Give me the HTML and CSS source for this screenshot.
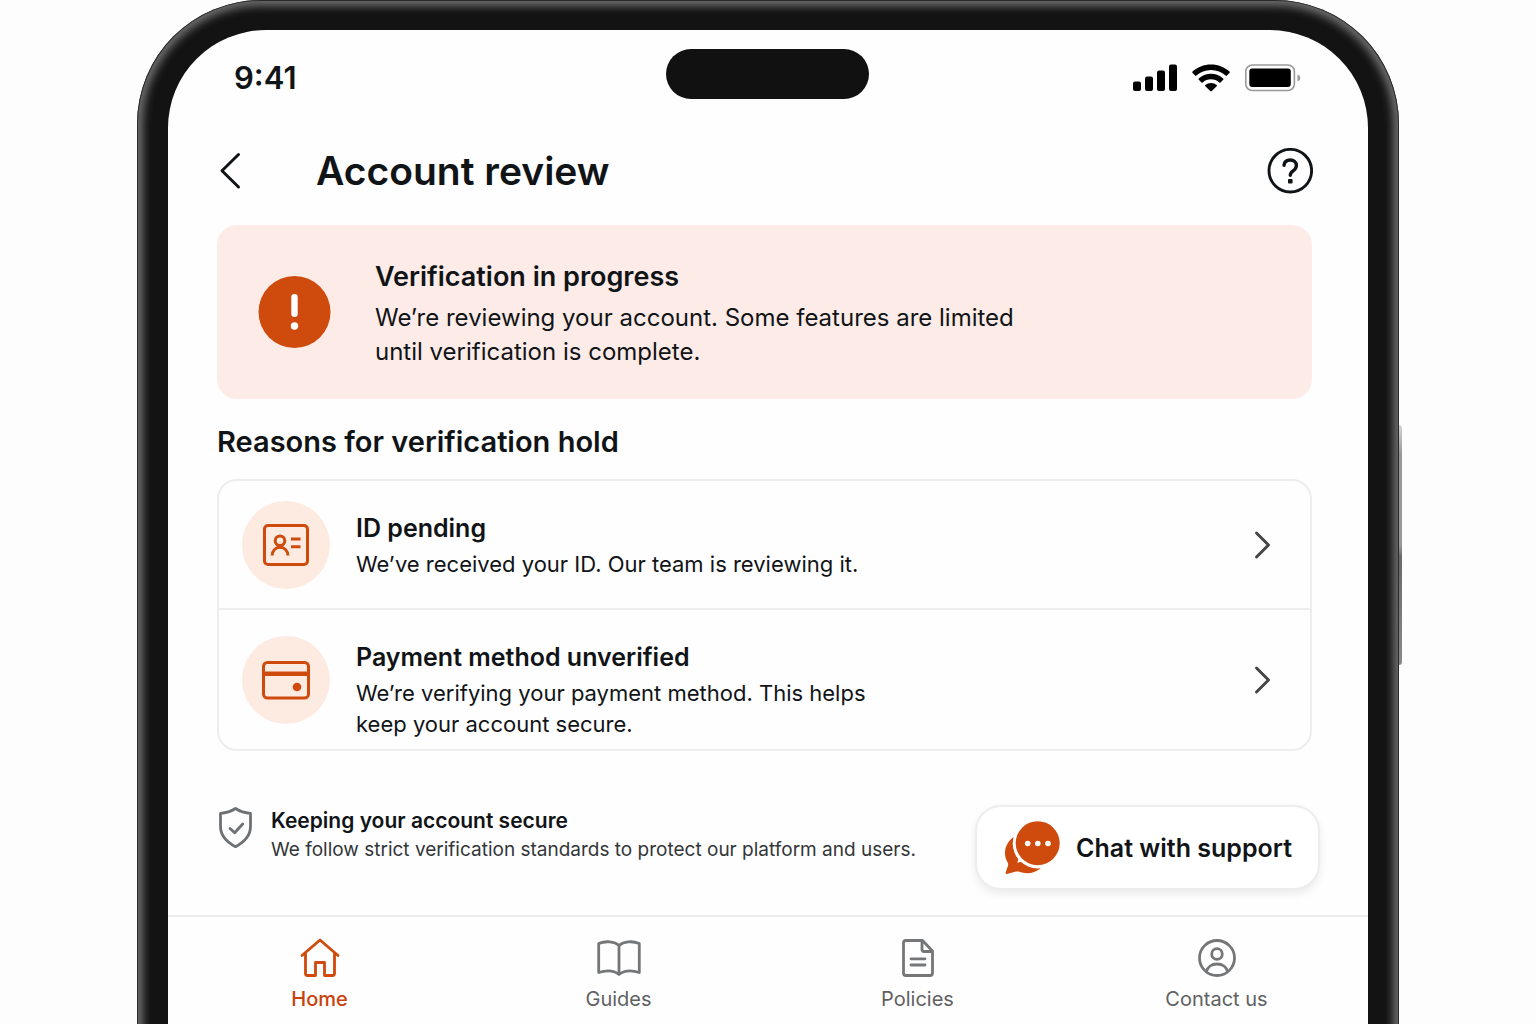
FILE: index.html
```html
<!DOCTYPE html>
<html lang="en">
<head>
  <meta charset="utf-8">
  <meta name="viewport" content="width=device-width, initial-scale=1">
  <title>Account review</title>
  <link rel="stylesheet" href="styles.css">
</head>
<body>
  <div class="device">
    <span class="side-button"></span>
    <div class="bezel">
      <div class="screen">
        <div class="status-bar">
          <time class="clock">9:41</time>
          <span class="island"></span>
          <div class="status-icons">
            <svg width="44" height="28" viewBox="0 0 44 28" aria-hidden="true">
              <rect x="0" y="17.500" width="8" height="9.500" rx="2"/>
              <rect x="12" y="12.500" width="8" height="14.500" rx="2"/>
              <rect x="24" y="6.500" width="8" height="20.500" rx="2"/>
              <rect x="36" y="0.500" width="8" height="26.500" rx="2"/>
            </svg>
            <svg width="38" height="28" viewBox="0 0 38 28" aria-hidden="true">
              <path d="M19 .5C11.800 .5 5.200 3.200.5 7.600c-.4.400-.4.900 0 1.300l2.600 2.700c.4.400.9.400 1.300 0C8.200 8 13.300 5.900 19 5.900S29.800 8 33.600 11.600c.4.400.9.400 1.300 0l2.600-2.700c.4-.4.400-.9 0-1.300C32.800 3.200 26.200.5 19 .5z"/>
              <path d="M19 9.700c-4.700 0-9 1.800-12.200 4.700-.4.400-.4.900 0 1.300l2.700 2.700c.4.400.8.400 1.200 0 2.200-2 5.100-3.200 8.300-3.200s6.100 1.200 8.300 3.200c.4.400.8.400 1.200 0l2.700-2.700c.4-.4.400-.9 0-1.300C28 11.500 23.700 9.700 19 9.700z"/>
              <path d="M19 19c-2.200 0-4.200.8-5.700 2.100-.4.400-.4.800 0 1.200l4.900 4.800c.5.500 1.100.5 1.600 0l4.900-4.800c.4-.4.400-.8 0-1.200C23.200 19.800 21.200 19 19 19z"/>
            </svg>
            <svg width="56" height="28" viewBox="0 0 56 28" aria-hidden="true">
              <rect x=".8" y="1" width="48.600" height="25.500" rx="6.500" fill="none" stroke="#9a9a9a" stroke-width="1.600"/>
              <rect x="4.300" y="4.500" width="41.500" height="18.500" rx="3"/>
              <path d="M52.500 10.500c2 .8 2.800 2 2.800 3.500s-.8 2.700-2.800 3.500z" fill="#9a9a9a"/>
            </svg>
          </div>
        </div>

        <header class="header">
          <button class="back" type="button" aria-label="Back">
            <svg width="26" height="40" viewBox="0 0 26 40" aria-hidden="true"><path d="M21.500 3.500 5 19.800 21.500 36"/></svg>
          </button>
          <h1 class="title">Account review</h1>
          <button class="help" type="button" aria-label="Help">
            <svg width="46" height="46" viewBox="0 0 46 46" aria-hidden="true">
              <circle cx="23.300" cy="22.700" r="21.300" stroke-width="2.900"/>
              <path d="M17 17.200c.4-3.400 2.900-5.200 6.200-5.200 3.600 0 6.200 2.200 6.200 5.500 0 2.700-1.500 4-3.300 5.300-2 1.400-2.800 2.200-2.800 4.400" stroke-width="3.400"/>
              <rect class="solid" x="21" y="31" width="4.600" height="4.400" rx="1"/>
            </svg>
          </button>
        </header>

        <main class="content">
          <section class="alert">
            <svg class="alert-icon" width="73" height="73" viewBox="0 0 73 73" aria-hidden="true">
              <circle cx="36.500" cy="36" r="36" fill="#cf4b0d"/>
              <rect x="33.300" y="18" width="6.400" height="23" rx="3.200" fill="#fff"/>
              <circle cx="36.500" cy="50" r="3.700" fill="#fff"/>
            </svg>
            <div class="alert-text">
              <h2 class="alert-title">Verification in progress</h2>
              <p class="alert-body">We’re reviewing your account. Some features are limited until verification is complete.</p>
            </div>
          </section>

          <h2 class="section-title">Reasons for verification hold</h2>

          <div class="reasons">
            <a class="reason" href="#id">
              <span class="badge">
                <svg width="52" height="52" viewBox="0 0 52 52" aria-hidden="true">
                  <rect x="4.500" y="6.500" width="43" height="39" rx="3.500"/>
                  <circle cx="20" cy="21.800" r="4.800"/>
                  <path d="M12.200 36.500c.3-5.200 3.400-8.200 7.800-8.200s7.600 3 7.900 8.200M31 20h9.500M31 27.700h9.500"/>
                </svg>
              </span>
              <span class="reason-text">
                <strong class="reason-title">ID pending</strong>
                <span class="reason-body">We’ve received your ID. Our team is reviewing it.</span>
              </span>
              <svg class="chevron" width="20" height="32" viewBox="0 0 20 32" aria-hidden="true"><path d="M3.500 4 15.500 16 3.500 28"/></svg>
            </a>
            <a class="reason reason-long" href="#payment">
              <span class="badge">
                <svg width="52" height="52" viewBox="0 0 52 52" aria-hidden="true">
                  <rect x="3.500" y="8.500" width="45" height="35.500" rx="4"/>
                  <path d="M3.500 19.700h45" stroke-width="4.500"/>
                  <circle cx="37" cy="33" r="4.300" fill="#cf4b0d" stroke="none"/>
                </svg>
              </span>
              <span class="reason-text">
                <strong class="reason-title">Payment method unverified</strong>
                <span class="reason-body">We’re verifying your payment method. This helps keep your account secure.</span>
              </span>
              <svg class="chevron" width="20" height="32" viewBox="0 0 20 32" aria-hidden="true"><path d="M3.500 4 15.500 16 3.500 28"/></svg>
            </a>
          </div>
        </main>

        <section class="assist">
          <svg class="shield" width="37" height="44" viewBox="0 0 37 44" aria-hidden="true">
            <path d="M18.500 3.500c4.800 3.200 9.600 4.500 15 4.800v13c0 9.500-5.500 15.500-15 20.400C9 36.800 3.500 30.800 3.500 21.300v-13c5.400-.3 10.200-1.600 15-4.800z"/>
            <path d="m13 23.500 4.700 4.300 8-8.800"/>
          </svg>
          <div class="assist-text">
            <h3 class="assist-title">Keeping your account secure</h3>
            <p class="assist-body">We follow strict verification standards to protect our platform and users.</p>
          </div>
          <button class="chat" type="button">
            <svg width="55" height="54" viewBox="0 0 55 54" aria-hidden="true">
              <path d="M12 14C4.500 17.500 0 24.500 0 32c0 3.700 1 7 2.800 9.800.5 1 .5 2 .2 3L.6 51.700c-.2.800.2 1.300 1 1.200l9.600-2.300c1-.2 2-.1 3 .2 8 2.900 16.300 1.300 22.200-4.400z"/>
              <circle class="dot" cx="32.700" cy="22.400" r="25"/>
              <circle cx="32.700" cy="22.200" r="22"/>
              <path class="dot" d="M13.500 38l-1.300 3.800 4.300-1z"/>
              <circle class="dot" cx="22.700" cy="22.500" r="2.800"/>
              <circle class="dot" cx="32.800" cy="22.500" r="2.800"/>
              <circle class="dot" cx="43" cy="22.500" r="2.800"/>
            </svg>
            Chat with support
          </button>
        </section>

        <nav class="tabs" aria-label="Main">
          <a class="tab tab-active" href="#home" aria-current="page">
            <svg width="44" height="44" viewBox="0 0 44 44" aria-hidden="true">
              <path d="M4 19.500 22 4l18 15.500M7.500 17v20.500a2 2 0 0 0 2 2h8v-13h9v13h8a2 2 0 0 0 2-2V17"/>
            </svg>
            Home
          </a>
          <a class="tab" href="#guides">
            <svg width="44" height="44" viewBox="0 0 44 44" aria-hidden="true">
              <path d="M22 9.500C17.500 5.500 9 4.500 1.700 7.500v29c8-2.500 15.300-2 20.300 2 5-4 12.300-4.500 20.300-2v-29C35 4.500 26.500 5.500 22 9.500zM22 10v28.500"/>
            </svg>
            Guides
          </a>
          <a class="tab" href="#policies">
            <svg width="44" height="44" viewBox="0 0 44 44" aria-hidden="true">
              <path d="M10 4.500h16.500L36.500 15v22a2.500 2.500 0 0 1-2.500 2.500H10A2.500 2.500 0 0 1 7.500 37V7A2.500 2.500 0 0 1 10 4.500zM26 5v8.500a2 2 0 0 0 2 2h8.500M15 22.800h14M15 29h14"/>
            </svg>
            Policies
          </a>
          <a class="tab" href="#contact">
            <svg width="44" height="44" viewBox="0 0 44 44" aria-hidden="true">
              <circle cx="22" cy="22" r="17.500"/>
              <circle cx="22" cy="18" r="5.300"/>
              <path d="M11.500 35.500C12.500 31 16.500 28 22 28s9.500 3 10.500 7.500"/>
            </svg>
            Contact us
          </a>
        </nav>
      </div>
    </div>
  </div>
</body>
</html>
```

FILE: styles.css
```css
* {
  box-sizing: border-box;
}

body {
  margin: 0;
  background: #fdfdfd;
  color: #111417;
  font-family: Inter, "Liberation Sans", sans-serif;
}

h1, h2, h3, p {
  margin: 0;
  font-weight: 600;
}

button {
  margin: 0;
  padding: 0;
  border: 0;
  background: none;
  color: inherit;
  font: inherit;
  cursor: pointer;
}

a {
  color: inherit;
  text-decoration: none;
}

svg {
  display: block;
  flex: none;
}

/* Phone body */
.device {
  position: relative;
  margin: 0 137px;
}

.side-button {
  position: absolute;
  top: 425px;
  right: -3px;
  width: 4px;
  height: 240px;
  border-radius: 0 3px 3px 0;
  background: linear-gradient(#d5d5d5, #999 12%, #999 50%, #6a6a6a 55%, #8a8a8a);
}

.bezel {
  position: relative;
  display: flex;
  min-height: 100vh;
  padding: 30px 31px 0;
  overflow: hidden;
  border-radius: 124px 124px 0 0;
  background: #131313;
}

/* Metal rim, running past the bottom edge so that only three sides catch light */
.bezel::before {
  content: "";
  position: absolute;
  inset: 0 0 -40px;
  border-radius: 124px 124px 0 0;
  box-shadow: inset 0 0 0 1px #2a2a2a, inset 0 0 8px 6px #6e6e6e;
}

.screen {
  position: relative;
  display: flex;
  flex: 1;
  flex-direction: column;
  min-width: 0;
  border-radius: 98px 98px 0 0;
  background: #fefefe;
}

/* Status bar */
.status-bar {
  display: grid;
  grid-template-columns: 1fr auto 1fr;
  align-items: end;
  padding: 19px 67px 0 66px;
}

.clock {
  font-size: 31px;
  font-weight: 600;
  line-height: 42px;
}

.island {
  width: 203px;
  height: 50px;
  border-radius: 25px;
  background: #111;
}

.status-icons {
  display: flex;
  align-items: center;
  justify-content: flex-end;
  gap: 15px;
  height: 42px;
  fill: #000;
}

/* Header */
.header {
  display: flex;
  align-items: center;
  padding: 49px 55px 31px 49px;
}

.back {
  width: 99px;
}

.back svg {
  fill: none;
  stroke: #111417;
  stroke-width: 3;
  stroke-linecap: round;
  stroke-linejoin: round;
}

.title {
  flex: 1;
  font-size: 39px;
  line-height: 46px;
}

.help svg {
  fill: none;
  stroke: #111417;
  stroke-linecap: round;
}

.help .solid {
  fill: #111417;
  stroke: none;
}

/* Content */
.content {
  padding: 0 56px 0 49px;
}

.alert {
  display: flex;
  align-items: center;
  gap: 44px;
  padding: 30px 41px;
  border-radius: 20px;
  background: #fdebe7;
}

.alert-text {
  max-width: 640px;
  padding-top: 4px;
}

.alert-title {
  margin-bottom: 6px;
  font-size: 27px;
  line-height: 36px;
}

.alert-body {
  font-size: 24px;
  font-weight: 400;
  line-height: 34px;
}

.section-title {
  margin: 25px 0 19px;
  font-size: 29px;
  line-height: 36px;
}

.reasons {
  border: 2px solid #eceded;
  border-radius: 20px;
}

.reason {
  display: flex;
  align-items: center;
  padding: 0 37px 0 23px;
}

.reason + .reason {
  border-top: 2px solid #eceded;
}

.badge {
  display: grid;
  flex: none;
  place-items: center;
  width: 88px;
  height: 88px;
  margin-right: 26px;
  border-radius: 50%;
  background: #fdebe2;
}

.badge svg {
  fill: none;
  stroke: #cf4b0d;
  stroke-width: 3;
}

.reason-text {
  flex: 1;
  padding: 29px 0 28px;
}

.reason-long .reason-text {
  padding-bottom: 9px;
}

.reason-title {
  display: block;
  margin-bottom: 3px;
  font-size: 25px;
  font-weight: 600;
  line-height: 36px;
}

.reason-body {
  display: block;
  max-width: 520px;
  font-size: 22px;
  line-height: 31px;
}

.chevron {
  fill: none;
  stroke: #444648;
  stroke-width: 3;
  stroke-linecap: round;
  stroke-linejoin: round;
}

/* Security note and support */
.assist {
  display: flex;
  align-items: flex-start;
  margin-top: auto;
  padding: 24px 48px 25px 49px;
}

.shield {
  margin-right: 17px;
  fill: none;
  stroke: #6e7174;
  stroke-width: 2.800;
  stroke-linecap: round;
  stroke-linejoin: round;
}

.assist-text {
  flex: 1;
  padding-top: 2px;
}

.assist-title {
  font-size: 21px;
  line-height: 28px;
}

.assist-body {
  color: #333639;
  font-size: 19px;
  font-weight: 400;
  line-height: 29px;
}

.chat {
  display: flex;
  align-items: center;
  gap: 16px;
  height: 85px;
  padding: 0 26px 0 28px;
  border: 2px solid #eceded;
  border-radius: 26px;
  background: #fff;
  box-shadow: 0 4px 8px rgba(0, 0, 0, 0.08);
  font-size: 25px;
  font-weight: 600;
  white-space: nowrap;
}

.chat svg {
  fill: #cf4b0d;
}

.chat .dot {
  fill: #fff;
}

/* Tab bar */
.tabs {
  display: grid;
  grid-template-columns: repeat(4, 1fr);
  padding: 19px 2px 11px;
  border-top: 2px solid #eceded;
}

.tab {
  display: flex;
  flex-direction: column;
  align-items: center;
  gap: 5px;
  color: #5f6163;
  font-size: 20px;
  line-height: 28px;
}

.tab svg {
  fill: none;
  stroke: #747678;
  stroke-width: 2.800;
  stroke-linecap: round;
  stroke-linejoin: round;
}

.tab-active {
  color: #c8430c;
  font-weight: 500;
}

.tab-active svg {
  stroke: #cf4b0d;
}
```
